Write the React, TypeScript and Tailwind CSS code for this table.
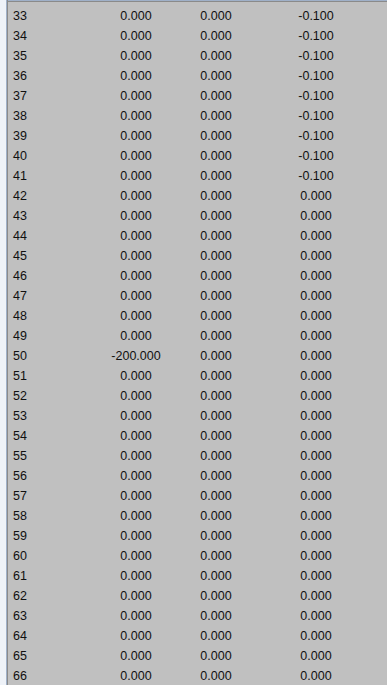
import React from "react";

const rows: [number, string, string, string][] = [];
for (let i = 33; i <= 66; i++) {
  const c1 = i === 50 ? "-200.000" : "0.000";
  const c3 = i <= 41 ? "-0.100" : "0.000";
  rows.push([i, c1, "0.000", c3]);
}

export default function App() {
  return (
    <div
      className="w-[387px] h-[685px] overflow-hidden flex bg-[#c0c0c0] text-black"
      style={{ fontFamily: '"Liberation Sans", Arial, sans-serif' }}
    >
      <div className="w-[6px] h-full bg-[#eef2f8] shrink-0" />
      <div className="w-[1px] h-full bg-[#9fb0c8] shrink-0" />
      <div className="w-[1px] h-full bg-[#8a8a8a] shrink-0" />
      <div className="flex-1 flex flex-col">
        <div className="h-[1px] bg-[#9fb0c8] shrink-0" />
        <div className="h-[1px] bg-[#8a8a8a] shrink-0" />
        <div className="pt-[4px] flex flex-col">
          {rows.map(([n, a, b, c]) => (
            <div
              key={n}
              className="grid grid-cols-[88px_80px_80px_120px] h-[20px] leading-[20px] text-[12.5px] text-[#101010]"
            >
              <div className="pl-[5px]">{n}</div>
              <div className="text-center">{a}</div>
              <div className="text-center">{b}</div>
              <div className="text-center">{c}</div>
            </div>
          ))}
        </div>
      </div>
    </div>
  );
}
